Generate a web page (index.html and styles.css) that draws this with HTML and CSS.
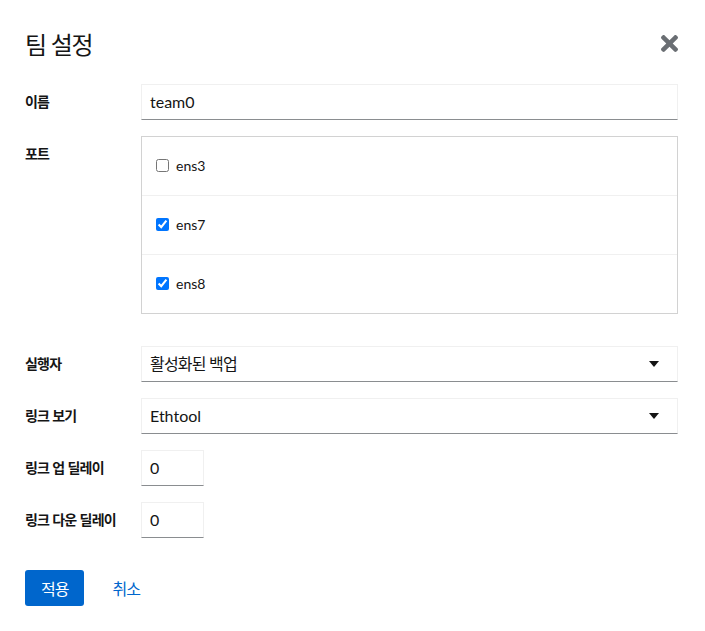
FILE: index.html
```html
<!DOCTYPE html>
<html lang="ko">
<head>
<meta charset="utf-8">
<title>팀 설정</title>
<link rel="stylesheet" href="styles.css">
</head>
<body>
<div class="modal">
  <header class="modal-header">
    <h1 class="modal-title">팀 설정</h1>
    <button class="close-btn" aria-label="닫기">
      <svg width="17" height="17" viewBox="0 80 352 352" aria-hidden="true"><path fill="#6a6e73" d="M242.72 256l100.07-100.07c12.28-12.28 12.28-32.19 0-44.48l-22.24-22.240c-12.28-12.28-32.19-12.28-44.48 0L176 189.28 75.93 89.21c-12.28-12.28-32.19-12.28-44.48 0L9.21 111.45c-12.28 12.28-12.28 32.19 0 44.48L109.28 256 9.21 356.07c-12.28 12.28-12.28 32.19 0 44.48l22.24 22.24c12.28 12.28 32.2 12.28 44.48 0L176 322.72l100.07 100.07c12.28 12.28 32.2 12.28 44.48 0l22.24-22.24c12.28-12.28 12.28-32.19 0-44.48L242.72 256z"/></svg>
    </button>
  </header>

  <form class="form">
    <label class="form-label">이름</label>
    <div class="form-control">team0</div>

    <label class="form-label">포트</label>
    <ul class="port-list">
      <li class="port-row"><input type="checkbox" class="check"><span>ens3</span></li>
      <li class="port-row"><input type="checkbox" class="check" checked><span>ens7</span></li>
      <li class="port-row"><input type="checkbox" class="check" checked><span>ens8</span></li>
    </ul>

    <label class="form-label">실행자</label>
    <div class="form-control select"><span class="ko">활성화된 백업</span><svg class="caret" width="10" height="6" viewBox="0 0 10 6"><path d="M0 0h10L5 6z" fill="#151515"/></svg></div>

    <label class="form-label">링크 보기</label>
    <div class="form-control select"><span>Ethtool</span><svg class="caret" width="10" height="6" viewBox="0 0 10 6"><path d="M0 0h10L5 6z" fill="#151515"/></svg></div>

    <label class="form-label">링크 업 딜레이</label>
    <div class="form-control small">0</div>

    <label class="form-label">링크 다운 딜레이</label>
    <div class="form-control small">0</div>
  </form>

  <footer class="modal-footer">
    <button class="btn btn-primary">적용</button>
    <button class="btn btn-link">취소</button>
  </footer>
</div>
</body>
</html>
```

FILE: styles.css
```css
* { box-sizing: border-box; }
html, body {
  margin: 0;
  padding: 0;
  background: #ffffff;
}
body {
  font-family: Lato, "Noto Sans CJK KR", sans-serif;
  color: #151515;
  font-size: 14px;
}
.modal {
  width: 705px;
  padding: 26px 27px 0 25px;
}
.modal-header {
  display: flex;
  justify-content: space-between;
  align-items: center;
  height: 36px;
}
.modal-title {
  margin: 0;
  font-family: "Noto Sans CJK KR", sans-serif;
  font-size: 24px;
  font-weight: 400;
  line-height: 36px;
  letter-spacing: -1.5px;
}
.close-btn {
  border: 0;
  background: none;
  padding: 0;
  width: 17px;
  height: 17px;
  margin-top: -2px;
  display: flex;
}
.form {
  margin-top: 22px;
  display: grid;
  grid-template-columns: 100px 1fr;
  column-gap: 16px;
  row-gap: 16px;
  align-items: start;
}
.form-label {
  font-family: "Noto Sans CJK KR", sans-serif;
  font-weight: 700;
  font-size: 14px;
  line-height: 21px;
  padding-top: 7px;
  white-space: nowrap;
  letter-spacing: -0.8px;
}
.form-control {
  height: 36px;
  border: 1px solid #f0f0f0;
  border-bottom-color: #8a8d90;
  padding: 0 8px;
  font-size: 16px;
  line-height: 34px;
  display: flex;
  align-items: center;
}
.ko {
  letter-spacing: -0.8px;
}
.form-control.small {
  width: 63px;
}
.select {
  justify-content: space-between;
  padding-right: 18px;
}
.caret { display: block; }
.port-list {
  list-style: none;
  margin: 0 0 16px;
  padding: 0;
  border: 1px solid #d2d2d2;
}
.port-row {
  height: 58px;
  display: flex;
  align-items: center;
  padding-left: 11px;
  padding-bottom: 2px;
  font-size: 14px;
}
.port-row + .port-row {
  border-top: 1px solid #f0f0f0;
  height: 59px;
}
.check {
  width: 13px;
  height: 13px;
  margin: 0 7px 0 3px;
}
.modal-footer {
  display: flex;
  gap: 12px;
  margin-top: 32px;
}
.btn {
  font-family: "Noto Sans CJK KR", sans-serif;
  font-size: 16px;
  line-height: 24px;
  padding: 6px 16px;
  border: 0;
  border-radius: 3px;
  height: 36px;
  letter-spacing: -1px;
}
.btn-primary {
  background: #0066cc;
  color: #ffffff;
}
.btn-link {
  background: none;
  color: #0066cc;
}
```
